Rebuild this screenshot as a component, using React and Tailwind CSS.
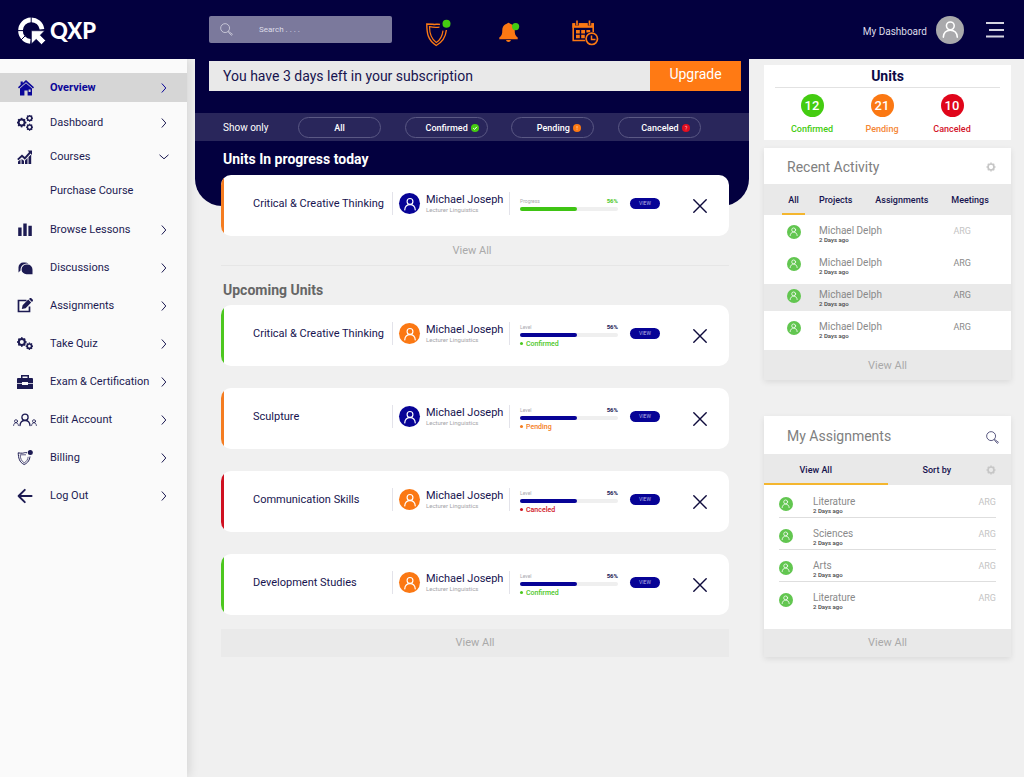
import React from "react";

function Person({ className }) {
  return (
    <svg viewBox="0 0 24 24" className={className} fill="none" stroke="currentColor" strokeWidth="2" strokeLinecap="round" aria-hidden="true">
      <circle cx="12" cy="7.500" r="5" />
      <path d="M3 22c.4-5.400 3.800-8.800 9-8.800s8.600 3.400 9 8.800" />
    </svg>
  );
}

function Avatar({ tone, size }) {
  return (
    <span className={`${size} ${tone} flex shrink-0 items-center justify-center rounded-full text-white`}>
      <Person className="h-2/3 w-2/3" />
    </span>
  );
}

function Gear({ cx, cy, r, w, teeth = 8 }) {
  const angles = Array.from({ length: teeth }, (_, i) => (i * 360) / teeth);
  return (
    <g>
      <circle cx={cx} cy={cy} r={r} fill="none" stroke="currentColor" strokeWidth={w} />
      {angles.map((a) => (
        <rect key={a} x={cx - w * 0.4} y={cy - r - w * 0.9} width={w * 0.8} height={w * 0.8} fill="currentColor" transform={`rotate(${a} ${cx} ${cy})`} />
      ))}
    </g>
  );
}

function Svg({ box = "0 0 16 16", className = "h-4 w-4", children }) {
  return (
    <svg viewBox={box} className={className} fill="currentColor" aria-hidden="true">
      {children}
    </svg>
  );
}

const icons = {
  home: (
    <Svg>
      <path d="M8 0 L16 7.200 L15 8.400 L8 2.200 L1 8.400 L0 7.200 L2.600 4.800 V1.500 H4.800 V2.900 Z" />
      <path fillRule="evenodd" d="M8 3.300 L14 8.600 V15.500 H9.600 V10.600 H6.400 V15.500 H2 V8.600 Z M10.600 9.600 h2 v2.400 h-2z" />
    </Svg>
  ),
  gears: (
    <Svg>
      <Gear cx={4.6} cy={7.6} r={3} w={2} />
      <Gear cx={12.6} cy={3.2} r={2.2} w={1.5} />
      <Gear cx={12.6} cy={12.2} r={2.2} w={1.5} />
    </Svg>
  ),
  growth: (
    <Svg>
      <path d="M1 12.500l2.500-2v4.500H1zM4.500 10l2.500 1.800V15H4.500zM8 11.500l2.500-2.500v6H8zM11.500 8L14.200 5.500V15h-2.700z" />
      <path d="M.8 10.600L5 6.800l2.800 2.500L13.500 3" fill="none" stroke="currentColor" strokeWidth="1.900" />
      <path d="M10.600 1.500H15v4.400z" />
    </Svg>
  ),
  bars: (
    <Svg>
      <path d="M1.200 5.500h3.400v8.500H1.200zM6.300 1.500h3.400v12.500H6.300zM11.400 3.800h3.400v10.200h-3.400z" />
    </Svg>
  ),
  chat: (
    <Svg>
      <path d="M1.500 12.500V7.200A4.700 4.700 0 0 1 6.200 2.500h1.500a5.500 5.500 0 0 1 3.800 1.300A6.300 6.300 0 0 0 3.500 10.500z" />
      <path d="M9.500 4.500h.8A5 5 0 0 1 15.500 9.700v4.600H9.500a4.900 4.900 0 0 1 0-9.800z" />
    </Svg>
  ),
  edit: (
    <Svg>
      <path d="M9.500 2.500H1.500v11h11V8.500" fill="none" stroke="currentColor" strokeWidth="1.700" />
      <path d="M4.800 11l.8-3.800 5.600-5.600 3 3L8.600 10.200zM12 1l.7-.7a1.200 1.200 0 0 1 1.700 0l1.200 1.200a1.200 1.200 0 0 1 0 1.700L15 4z" />
    </Svg>
  ),
  quiz: (
    <Svg>
      <Gear cx={4.8} cy={6} r={3} w={2} />
      <Gear cx={12.4} cy={10.2} r={2.2} w={1.7} />
    </Svg>
  ),
  briefcase: (
    <Svg>
      <path fillRule="evenodd" d="M4 4V1h8v3h3a1 1 0 0 1 1 1v4h-5V8H5v1H0V5a1 1 0 0 1 1-1zM5.500 4h5V2.500h-5z" />
      <path d="M0 9.800h5V11h6V9.800h5V15H0z" />
    </Svg>
  ),
  people: (
    <Svg box="0 0 24 14" className="h-[14px] w-6">
      <g fill="none" stroke="currentColor" strokeLinecap="round">
        <circle cx="12" cy="4.200" r="3.100" strokeWidth="1.300" />
        <path d="M7 12.500c.2-3 2-5 5-5s4.800 2 5 5" strokeWidth="1.300" />
        <circle cx="3" cy="8.200" r="1.500" strokeWidth=".8" />
        <path d="M.6 12.500c.2-1.800 1-2.700 2.400-2.700s2.200.9 2.400 2.700" strokeWidth=".8" />
        <circle cx="21" cy="8.200" r="1.500" strokeWidth=".8" />
        <path d="M18.600 12.500c.2-1.800 1-2.700 2.400-2.700s2.200.9 2.400 2.700" strokeWidth=".8" />
      </g>
    </Svg>
  ),
  billing: (
    <Svg>
      <path d="M10 2.800C8 2.200 7 3 5.500 3.200 4 3.400 2.500 3 1.200 2.800c.3 5 1 9.500 6 11.700 4-1.800 5.300-4.500 5.800-8" fill="none" stroke="currentColor" strokeWidth="1" />
      <path d="M9 4.800H3.200c.2 3.500 1 6.200 4 8 2.700-1.300 3.600-3.600 4-6" fill="none" stroke="currentColor" strokeWidth=".7" />
      <circle cx="13.300" cy="2.600" r="2.500" />
    </Svg>
  ),
  logout: (
    <Svg>
      <path d="M7.800 1.800L1.600 8l6.200 6.200M1.600 8h13" fill="none" stroke="currentColor" strokeWidth="1.900" strokeLinecap="round" strokeLinejoin="round" />
    </Svg>
  ),
};

function Chevron({ down }) {
  return down ? (
    <Svg box="0 0 10 6" className="h-[6px] w-[10px]">
      <path d="M.5 .8l4.500 4 4.500-4" fill="none" stroke="currentColor" />
    </Svg>
  ) : (
    <Svg box="0 0 6 10" className="mr-[2px] h-[10px] w-[6px]">
      <path d="M.8 .5l4 4.500-4 4.500" fill="none" stroke="currentColor" />
    </Svg>
  );
}

function Search({ className }) {
  return (
    <svg viewBox="0 0 14 14" className={className} fill="none" stroke="currentColor" strokeWidth=".9" aria-hidden="true">
      <circle cx="5.500" cy="5.500" r="4.800" />
      <path d="M8.900 8.900l1 1" />
      <path d="M10 9.600l3.400 2.600-1.100 1.100-2.900-3z" />
    </svg>
  );
}

function NavLink({ icon, label, height, down }) {
  return (
    <li>
      <a href="#" className={`${height} flex items-center pr-[18px]`}>
        <span className="flex w-[50px] justify-center">{icon}</span>
        <span className="flex-1 text-[11px] leading-4">{label}</span>
        {down !== undefined && <Chevron down={down} />}
      </a>
    </li>
  );
}

function Sidebar() {
  return (
    <nav className="w-[187px] shrink-0 bg-[#fafafa] pt-[14px] text-[#1c1a52] shadow-[2px_0_10px_rgba(0,0,0,0.12)]">
      <ul>
        <li>
          <a href="#" className="flex h-[29px] items-center bg-[#d6d6d6] pr-[18px] font-bold text-[#0b0799]">
            <span className="flex w-[50px] justify-center pl-[2px]">{icons.home}</span>
            <span className="flex-1 text-[11px] leading-4">Overview</span>
            <Chevron />
          </a>
        </li>
      </ul>
      <ul className="mt-1">
        <NavLink height="h-[34px]" icon={icons.gears} label="Dashboard" down={false} />
        <NavLink height="h-[34px]" icon={icons.growth} label="Courses" down />
        <NavLink height="h-[34px]" label="Purchase Course" />
      </ul>
      <ul className="mt-[3px]">
        <NavLink height="h-[38px]" icon={icons.bars} label="Browse Lessons" down={false} />
        <NavLink height="h-[38px]" icon={icons.chat} label="Discussions" down={false} />
        <NavLink height="h-[38px]" icon={icons.edit} label="Assignments" down={false} />
        <NavLink height="h-[38px]" icon={icons.quiz} label="Take Quiz" down={false} />
        <NavLink height="h-[38px]" icon={icons.briefcase} label="Exam & Certification" down={false} />
        <NavLink height="h-[38px]" icon={icons.people} label="Edit Account" down={false} />
        <NavLink height="h-[38px]" icon={icons.billing} label="Billing" down={false} />
        <NavLink height="h-[38px]" icon={icons.logout} label="Log Out" down={false} />
      </ul>
    </nav>
  );
}

function Header() {
  return (
    <header className="relative z-10 flex h-[59px] items-center bg-[#03003f] pr-5 text-white">
      <a href="#" className="flex w-[209px] items-center gap-1 pt-[3px] pl-[18px]">
        <svg viewBox="0 0 28 28" className="h-7 w-7" aria-hidden="true">
          <path d="M24 12.300A10.800 10.800 0 1 0 12.300 24.400" fill="none" stroke="#fff" strokeWidth="4.600" />
          <path d="M13.200 0v6M0 13.600h6M3 23l4-4" stroke="#03003f" strokeWidth="1" />
          <path d="M13.500 13.800H26.500l-4.300 4.400 5.300 5.300-4 4-5.300-5.300-4.700 4.600z" fill="#fff" stroke="#03003f" strokeWidth=".5" />
        </svg>
        <span className="font-[Lato] text-[22px] leading-6 font-black">QXP</span>
      </a>
      <label className="flex h-[27px] w-[183px] items-center rounded-[2px] bg-[#7b799c] pl-[11px]">
        <Search className="h-[13px] w-[13px] text-[#d3d2e0]" />
        <input type="text" aria-label="Search" placeholder="Search . . . ." className="ml-[26px] w-24 bg-transparent text-[8px] text-white outline-none placeholder:text-[#dddce8] placeholder:opacity-100" />
      </label>
      <div className="ml-[33px] flex items-center pt-[6px]">
        <button type="button" aria-label="Protection" className="mr-[47px]">
          <svg viewBox="0 0 27 28" className="h-7 w-[27px]" fill="none" aria-hidden="true">
            <path d="M15 5.500C12 4.500 11 6 8 5.300L1.800 5c0 9 .8 16 9.400 21.500 6.500-3.500 9.400-8.500 10.200-15.500" stroke="#fb7813" strokeWidth="1.400" />
            <path d="M14.500 8.200c-2.500 0-4 .8-10-.6 0 7 1.500 12.300 6.800 16 4.400-2.800 6-6.500 6.700-12" stroke="#fb7813" strokeWidth="1.200" />
            <circle cx="21.500" cy="4.800" r="4" fill="#44cc11" />
          </svg>
        </button>
        <button type="button" aria-label="Notifications" className="mr-[50px]">
          <svg viewBox="0 0 22 22" className="h-[22px] w-[22px]" fill="#fb7813" aria-hidden="true">
            <path d="M8.200 1.600a1.500 1.500 0 0 1 2.600 0c3.200.8 4.900 3.300 4.900 6.400 0 4 .7 6 3 7.500v1.700H.3v-1.700c2.300-1.500 3-3.500 3-7.500 0-3.100 1.700-5.600 4.900-6.400z" />
            <path d="M7 18h5a2.600 2.600 0 0 1-5 0z" />
            <circle cx="16.600" cy="4.600" r="3.600" fill="#44cc11" />
          </svg>
        </button>
        <button type="button" aria-label="Calendar">
          <svg viewBox="0 0 28 26" className="h-[26px] w-7" fill="none" stroke="#fb7813" aria-hidden="true">
            <path d="M15 20.500H2.200V4h20v9" strokeWidth="1.600" />
            <path d="M1.400 3.200h21.600v4.600H1.400z" fill="#fb7813" stroke="none" />
            <path d="M6 0v5.500M18.500 0v5.500" stroke="#03003f" strokeWidth="3.400" />
            <path d="M6 .5v5M18.500 .5v5" strokeWidth="1.700" />
            <path d="M5 10h3.800v3.400H5zM10.200 10h3.800v3.400h-3.800zM15.400 10h3.800v2.600h-3.800zM5 14.800h3.800v3.400H5zM10.200 14.800h3.600v3.400h-3.600z" fill="#fb7813" stroke="none" />
            <circle cx="20.800" cy="18.800" r="7" fill="#03003f" stroke="none" />
            <circle cx="20.800" cy="18.800" r="5.700" strokeWidth="1.700" />
            <path d="M20.500 15.500v4h4" strokeWidth="1.500" />
          </svg>
        </button>
      </div>
      <a href="#" className="ml-auto flex items-center gap-[9px] text-[10px] text-[#dcdbe8]">
        <span className="pt-1 leading-4">My Dashboard</span>
        <Avatar tone="bg-[#a9a9ac]" size="h-7 w-7" />
      </a>
      <button type="button" aria-label="Menu" className="ml-[22px]">
        <svg viewBox="0 0 18 18" className="h-[18px] w-[18px]" stroke="#d5d4df" strokeWidth="2" aria-hidden="true">
          <path d="M0 2h18M3 9h15M0 15.500h18" />
        </svg>
      </button>
    </header>
  );
}

function Badge({ tone, children }) {
  return (
    <svg viewBox="0 0 8 8" className="h-2 w-2" aria-hidden="true">
      <circle cx="4" cy="4" r="4" fill={tone} />
      {children}
    </svg>
  );
}

function Filter({ label, children }) {
  return (
    <button type="button" className={`${children ? "pl-3" : ""} flex h-[21px] w-[83px] items-center justify-center gap-[3px] rounded-full border border-[#5a5884] pt-px text-[9px] leading-3 font-medium`}>
      {label}
      {children}
    </button>
  );
}

const accents = {
  pending: { edge: "bg-[#f47c20]", text: "text-[#f47c20]", label: "Pending" },
  confirmed: { edge: "bg-[#4cc71e]", text: "text-[#4cc71e]", label: "Confirmed" },
  canceled: { edge: "bg-[#cf1020]", text: "text-[#cf1020]", label: "Canceled" },
};

function UnitCard({ title, status, avatar, live }) {
  const accent = accents[status];
  return (
    <article className="flex h-[61px] overflow-hidden rounded-[10px] bg-white text-[#17144f]">
      <span className={`${accent.edge} w-[3px]`} />
      <div className="flex flex-1 items-center pb-1 pl-[29px]">
        <h3 className="w-[139px] text-[11px] leading-4 whitespace-nowrap">{title}</h3>
        <div className="flex h-[23px] w-[118px] items-center gap-[6px] border-x border-[#e3e3ea] pl-[6px]">
          <Avatar tone={avatar} size="h-[21px] w-[21px]" />
          <p className="whitespace-nowrap">
            <span className="block text-[11px] leading-3">Michael Joseph</span>
            <span className="block text-[6px] leading-2 text-[#a4a4a8]">Lecturer Linguistics</span>
          </p>
        </div>
        <div className="ml-[10px] w-[98px]">
          <p className="flex justify-between text-[6px] leading-2">
            <span className="text-[5px] text-[#a9a9b0]">{live ? "Progress" : "Level"}</span>
            <span className={live ? "font-bold text-[#4cc71e]" : "font-bold"}>56%</span>
          </p>
          <div role="progressbar" aria-label={`${title} completion`} aria-valuenow={56} aria-valuemin={0} aria-valuemax={100} className="mt-[2px] h-1 rounded-full bg-[#efefef]">
            <div className={`${live ? "bg-[#3fc414]" : "bg-[#070396]"} h-1 rounded-full`} style={{ width: "58%" }} />
          </div>
          {!live && (
            <p className={`${accent.text} -mb-1 flex items-center gap-[3px] pt-[2px] text-[7px] leading-[10px] font-medium`}>
              <span className="h-[3px] w-[3px] rounded-full bg-current" />
              {accent.label}
            </p>
          )}
        </div>
        <button type="button" className="ml-3 h-[11px] w-[30px] rounded-full bg-[#070396] text-center text-[5px] leading-[11px] text-[#b9b8e6]">VIEW</button>
      </div>
      <button type="button" aria-label={`Remove ${title}`} className="mr-[22px] pt-px">
        <svg viewBox="0 0 14 14" className="h-[14px] w-[14px]" stroke="#0e0b3c" strokeWidth="1.400" strokeLinecap="round" aria-hidden="true">
          <path d="M.8 .8l12.400 12.400M13.200 .8L.8 13.200" />
        </svg>
      </button>
    </article>
  );
}

function Main() {
  return (
    <main className="ml-2 min-w-0 flex-1">
      <section className="rounded-b-[27px] bg-[#03003f] pt-[2px] pb-[38px] text-white">
        <div className="mr-2 ml-[14px] flex h-[30px] bg-[#e9e9e9]">
          <p className="flex-1 pl-[14px] text-[14px] leading-[30px] text-[#17144f]">You have 3 days left in your subscription</p>
          <button type="button" className="w-[91px] bg-[#ff7a14] pb-[3px] text-[14px]">Upgrade</button>
        </div>
        <div className="mt-[22px] flex h-[28px] items-center bg-[#29265b] pr-[48px] pl-7">
          <span className="w-[75px] pt-px text-[10px] leading-4">Show only</span>
          <div className="flex flex-1 items-center justify-between">
            <Filter label="All" />
            <Filter label="Confirmed">
              <Badge tone="#44cc11"><path d="M2.200 4.100l1.300 1.300 2.400-2.600" fill="none" stroke="#fff" /></Badge>
            </Filter>
            <Filter label="Pending">
              <Badge tone="#fb7813"><path d="M4 2v2.500M4 5.300v.8" stroke="#fbc08c" /></Badge>
            </Filter>
            <Filter label="Canceled">
              <Badge tone="#e10d1e"><path d="M3 3c.2-1.200 2-1 2 0 0 .8-1 .8-1 1.800M4 5.500v.7" fill="none" stroke="#f6a0a8" strokeWidth=".8" /></Badge>
            </Filter>
          </div>
        </div>
        <h2 className="pt-[9px] pl-7 text-[14px] leading-[18px] font-bold">Units In progress today</h2>
      </section>
      <div className="-mt-[31px] mr-5 ml-[26px]">
        <UnitCard title="Critical & Creative Thinking" status="pending" avatar="bg-[#070396]" live />
        <a href="#" className="block border-b border-[#e6e6e6] pt-[7px] pr-[6px] pb-[6px] text-center text-[11px] leading-4 text-[#a9a9a9]">View All</a>
        <h2 className="mt-[15px] mb-[6px] pl-[2px] text-[14px] leading-[18px] font-bold text-[#666]">Upcoming Units</h2>
        <div className="flex flex-col gap-[22px]">
          <UnitCard title="Critical & Creative Thinking" status="confirmed" avatar="bg-[#fb7813]" />
          <UnitCard title="Sculpture" status="pending" avatar="bg-[#070396]" />
          <UnitCard title="Communication Skills" status="canceled" avatar="bg-[#fb7813]" />
          <UnitCard title="Development Studies" status="confirmed" avatar="bg-[#fb7813]" />
        </div>
        <a href="#" className="mt-[14px] block bg-[#eaeaea] text-center text-[11px] leading-7 text-[#a9a9a9]">View All</a>
      </div>
    </main>
  );
}

function Count({ value, label, circle, text }) {
  return (
    <li className="flex w-[70px] flex-col items-center">
      <span className={`${circle} h-[23px] w-[23px] rounded-full text-center text-[13px] leading-[23px] font-medium text-white`}>{value}</span>
      <span className={`${text} mt-[6px] text-[9px] leading-3 font-medium`}>{label}</span>
    </li>
  );
}

function Ring() {
  return (
    <Svg box="0 0 10 10" className="h-[10px] w-[10px] text-[#c6c6c6]">
      <Gear cx={5} cy={5} r={3} w={1.7} teeth={8} />
    </Svg>
  );
}

function Stamp({ name }) {
  return (
    <p className="flex-1">
      <span className="block text-[10px] leading-[11px] text-[#8a8a8a]">{name}</span>
      <span className="block text-[6px] leading-2 font-medium text-[#444]">2 Days ago</span>
    </p>
  );
}

function Rail() {
  const activity = [
    { row: "", code: "text-[#c4c4c4]" },
    { row: "", code: "text-[#8a8a8a]" },
    { row: "bg-[#e9e9e9]", code: "text-[#8a8a8a]" },
    { row: "", code: "text-[#8a8a8a]" },
  ];
  return (
    <aside className="mr-[13px] ml-[15px] w-[247px] shrink-0 pt-[6px]">
      <section className="h-[75px] bg-white px-[11px] pt-[2px]">
        <h2 className="border-b border-[#e2e2e2] pb-[2px] text-center text-[14px] leading-[18px] font-bold text-[#0b0846]">Units</h2>
        <ul className="mt-[6px] flex px-[2px]">
          <Count value="12" label="Confirmed" circle="bg-[#44cc11]" text="text-[#44cc11]" />
          <Count value="21" label="Pending" circle="bg-[#fb7813]" text="text-[#f58634]" />
          <Count value="10" label="Canceled" circle="bg-[#e0051a]" text="text-[#d3122a]" />
        </ul>
      </section>

      <section className="mt-2 bg-white shadow-[0_2px_6px_rgba(0,0,0,0.09)]">
        <div className="flex h-9 items-center justify-between pt-px pr-[15px] pl-[23px]">
          <h2 className="text-[14px] leading-[18px] text-[#808080]">Recent Activity</h2>
          <button type="button" aria-label="Activity settings"><Ring /></button>
        </div>
        <div className="flex h-[31px] items-stretch gap-[23px] bg-[#e9e9e9] pl-[18px] text-[9px] font-medium text-[#17144f]">
          <button type="button" className="-mr-[9px] w-[23px] border-b-2 border-[#f4b62f] pt-[4px]">All</button>
          <button type="button" className="pt-[2px]">Projects</button>
          <button type="button" className="pt-[2px]">Assignments</button>
          <button type="button" className="pt-[2px]">Meetings</button>
        </div>
        <ul className="flex flex-col gap-[5px] pt-[5px] pb-[7px]">
          {activity.map((a, i) => (
            <li key={i} className={`${a.row} flex h-[27px] items-start pt-[5px] pr-[40px] pl-[23px]`}>
              <span className="w-8"><Avatar tone="bg-[#62c650]" size="h-[14px] w-[14px]" /></span>
              <Stamp name="Michael Delph" />
              <span className={`${a.code} text-[9px] leading-3`}>ARG</span>
            </li>
          ))}
        </ul>
        <a href="#" className="block bg-[#e9e9e9] pt-[2px] text-center text-[11px] leading-7 text-[#a9a9a9]">View All</a>
      </section>

      <section className="mt-9 bg-white shadow-[0_2px_6px_rgba(0,0,0,0.09)]">
        <div className="flex h-[38px] items-center justify-between pt-[2px] pr-3 pl-[23px]">
          <h2 className="text-[14px] leading-[18px] text-[#808080]">My Assignments</h2>
          <button type="button" aria-label="Search assignments" className="pt-[2px] text-[#3a3869]"><Search className="h-[13px] w-[13px]" /></button>
        </div>
        <div className="flex h-[31px] bg-[#e9e9e9] text-[9px] font-medium text-[#17144f]">
          <button type="button" className="w-1/2 border-b-2 border-[#f4b62f] pt-[4px] pr-5">View All</button>
          <button type="button" className="flex-1 pt-[2px]">Sort by</button>
          <button type="button" aria-label="Sort settings" className="mr-[15px]"><Ring /></button>
        </div>
        <ul className="px-[15px] pt-px pb-[15px]">
          {["Literature", "Sciences", "Arts", "Literature"].map((name, i) => (
            <li key={i} className="flex h-8 items-start border-b border-[#dedede] pt-[10px] last:border-b-0">
              <span className="w-[34px] pt-px"><Avatar tone="bg-[#62c650]" size="h-[14px] w-[14px]" /></span>
              <Stamp name={name} />
              <span className="text-[9px] leading-3 text-[#c4c4c4]">ARG</span>
            </li>
          ))}
        </ul>
        <a href="#" className="block bg-[#e9e9e9] text-center text-[11px] leading-7 text-[#a9a9a9]">View All</a>
      </section>
    </aside>
  );
}

export default function App() {
  return (
    <div className="flex min-h-screen flex-col bg-[#f0f0f0] font-[Roboto,'Noto_Sans',sans-serif]">
      <Header />
      <div className="flex flex-1">
        <Sidebar />
        <Main />
        <Rail />
      </div>
    </div>
  );
}
